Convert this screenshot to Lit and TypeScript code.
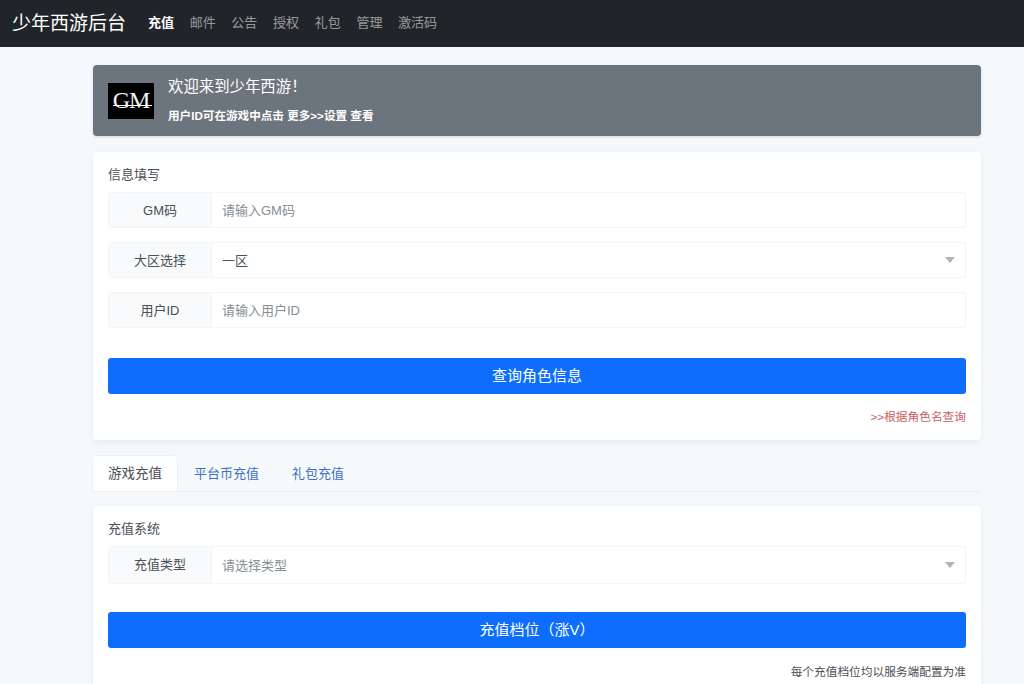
import { LitElement, css, html } from 'lit';
import { customElement } from 'lit/decorators.js';

const NAV_ITEMS = ['充值', '邮件', '公告', '授权', '礼包', '管理', '激活码'];

@customElement('app-root')
export class AppRoot extends LitElement {
  static override styles = css`
    :host {
      display: block;
      height: 684px;
      overflow: hidden;
      background: #f5f9fc;
      color: #212529;
      font-family: 'Liberation Sans', 'Noto Sans CJK SC', sans-serif;
      font-size: 13px;
    }

    .navbar {
      display: flex;
      align-items: center;
      height: 47px;
      padding: 0 12px 4px;
      box-sizing: border-box;
      background: #212529;
    }

    .brand {
      margin-right: 22px;
      color: #fff;
      font-size: 19px;
      white-space: nowrap;
    }

    .nav {
      display: flex;
      gap: 15.67px;
      color: rgba(255, 255, 255, 0.55);
    }

    .nav .active {
      color: #fff;
      font-weight: 700;
    }

    .container {
      display: flex;
      flex-direction: column;
      width: 888px;
      margin-left: 93px;
      padding-top: 18px;
    }

    .banner {
      display: flex;
      align-items: center;
      gap: 14px;
      height: 71px;
      margin-bottom: 16px;
      padding: 0 15px;
      border-radius: 4px;
      background: #6c757d;
      color: #fff;
      box-shadow: 0 1px 3px rgba(0, 0, 0, 0.15);
    }

    .logo {
      position: relative;
      display: flex;
      align-items: center;
      justify-content: center;
      width: 46px;
      height: 36px;
      background: #000;
      color: #f2f2f2;
      font-family: 'Liberation Serif', serif;
      font-size: 24px;
      letter-spacing: -1px;
    }

    .logo::after {
      content: '';
      position: absolute;
      left: 5px;
      right: 2px;
      top: 22px;
      height: 1px;
      background: #fff;
    }

    .banner-text {
      padding-bottom: 2px;
    }

    .banner h1 {
      margin: 0 0 10px;
      font-size: 15.4px;
      font-weight: 400;
      line-height: 22px;
    }

    .banner p {
      margin: 0;
      font-size: 11.6px;
      font-weight: 700;
      line-height: 16px;
    }

    .card {
      padding: 13px 15px;
      border-radius: 4px;
      background: #fff;
      box-shadow: 0 2px 6px rgba(0, 0, 0, 0.06);
    }

    .card-title {
      height: 20px;
      margin-bottom: 7px;
      color: #495057;
      line-height: 20px;
    }

    .group {
      display: flex;
      height: 36px;
      margin-bottom: 14px;
      border: 1px solid #f3f5f6;
      border-radius: 3px;
      box-sizing: border-box;
      color: #495057;
      line-height: 35px;
    }

    .group-label {
      flex: none;
      width: 102px;
      border-right: 1px solid #f3f5f6;
      background: #f9fafb;
      text-align: center;
    }

    .group-value {
      display: flex;
      flex: 1;
      align-items: center;
      justify-content: space-between;
      padding: 0 10px;
    }

    .placeholder {
      color: #868e96;
    }

    .caret {
      width: 0;
      height: 0;
      border-top: 6px solid #adb5bd;
      border-left: 5px solid transparent;
      border-right: 5px solid transparent;
    }

    .btn {
      height: 36px;
      margin-top: 30px;
      border-radius: 3px;
      background: #0d6efd;
      color: #fff;
      font-size: 15px;
      line-height: 36px;
      text-align: center;
    }

    .note {
      margin-top: 15px;
      font-size: 11.7px;
      line-height: 16px;
      text-align: right;
    }

    .note.red {
      color: #c9605f;
    }

    .first .note {
      padding-bottom: 2px;
    }

    .tabs {
      display: flex;
      gap: 1px;
      height: 36px;
      margin: 16px 0 14px;
      border-bottom: 1px solid #e9eef2;
      box-sizing: border-box;
      color: #3f6fc4;
      font-size: 13px;
    }

    .tab {
      padding: 0 16px;
      line-height: 36px;
    }

    .tab.active {
      padding: 0 15px;
      border-radius: 4px 4px 0 0;
      background: #fff;
      box-shadow: 0 0 0 1px #eef1f4;
      color: #495057;
      font-size: 13.5px;
    }

    .second .card-title {
      margin-bottom: 7px;
    }

    .second .group {
      height: 38px;
    }

    .second .btn {
      margin-top: 28px;
    }

    .second .note {
      margin-top: 16px;
      color: #495057;
    }
  `;

  override render() {
    return html`
      <nav class="navbar">
        <span class="brand">少年西游后台</span>
        <div class="nav">
          ${NAV_ITEMS.map(
            (item, i) => html`<span class=${i === 0 ? 'active' : ''}>${item}</span>`,
          )}
        </div>
      </nav>
      <main class="container">
        <section class="banner">
          <div class="logo">GM</div>
          <div class="banner-text">
            <h1>欢迎来到少年西游！</h1>
            <p>用户ID可在游戏中点击 更多>>设置 查看</p>
          </div>
        </section>

        <section class="card first">
          <div class="card-title">信息填写</div>
          <div class="group">
            <div class="group-label">GM码</div>
            <div class="group-value placeholder">请输入GM码</div>
          </div>
          <div class="group">
            <div class="group-label">大区选择</div>
            <div class="group-value">一区<span class="caret"></span></div>
          </div>
          <div class="group">
            <div class="group-label">用户ID</div>
            <div class="group-value placeholder">请输入用户ID</div>
          </div>
          <div class="btn">查询角色信息</div>
          <div class="note red">>>根据角色名查询</div>
        </section>

        <div class="tabs">
          <div class="tab active">游戏充值</div>
          <div class="tab">平台币充值</div>
          <div class="tab">礼包充值</div>
        </div>

        <section class="card second">
          <div class="card-title">充值系统</div>
          <div class="group">
            <div class="group-label">充值类型</div>
            <div class="group-value placeholder">请选择类型<span class="caret"></span></div>
          </div>
          <div class="btn">充值档位（涨V）</div>
          <div class="note">每个充值档位均以服务端配置为准</div>
        </section>
      </main>
    `;
  }
}

declare global {
  interface HTMLElementTagNameMap {
    'app-root': AppRoot;
  }
}
